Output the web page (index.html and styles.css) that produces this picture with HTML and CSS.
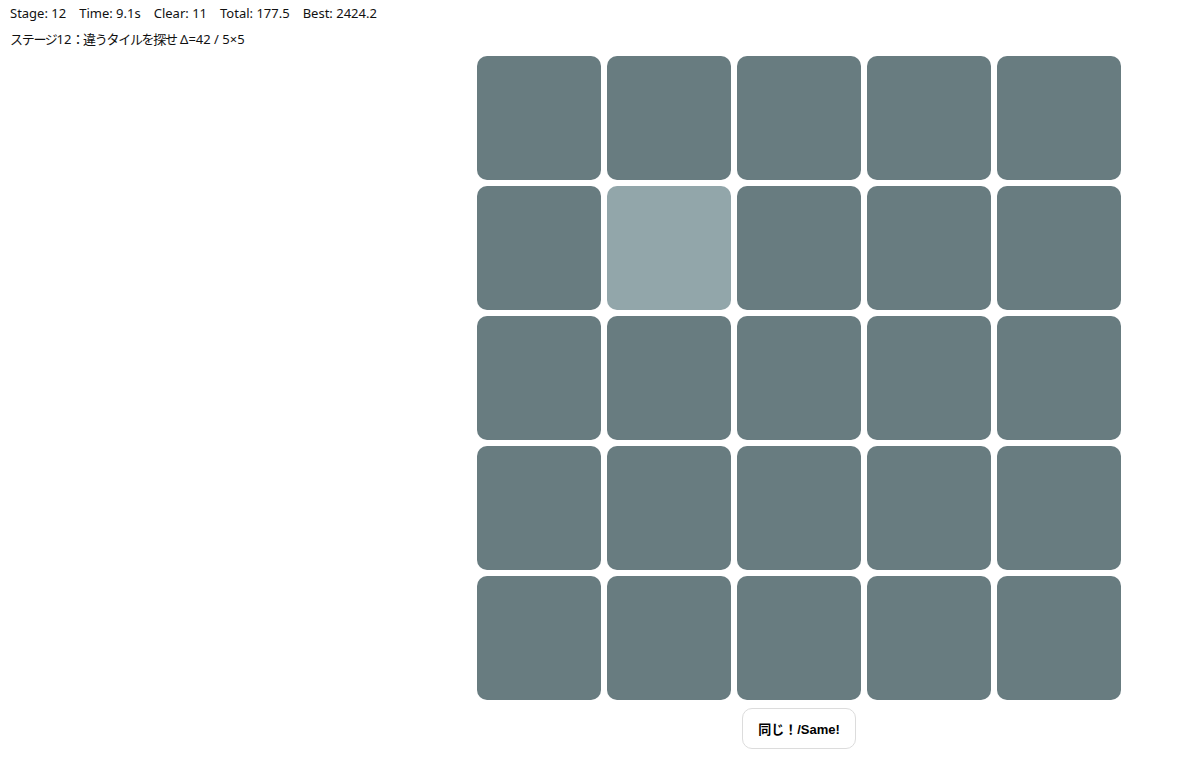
FILE: index.html
```html
<!DOCTYPE html>
<html lang="ja">
<head>
<meta charset="utf-8">
<title>違うタイルを探せ</title>
<link rel="stylesheet" href="styles.css">
</head>
<body>
<div class="stats">
  <span class="stat">Stage: 12</span>
  <span class="stat">Time: 9.1s</span>
  <span class="stat">Clear: 11</span>
  <span class="stat">Total: 177.5</span>
  <span class="stat">Best: 2424.2</span>
</div>
<div class="prompt"><span class="jp">ステージ</span>12<span class="jp">：違うタイルを探せ</span> Δ=42 / 5×5</div>
<div class="stage">
  <div class="board">
    <div class="grid">
      <div class="tile"></div><div class="tile"></div><div class="tile"></div><div class="tile"></div><div class="tile"></div>
      <div class="tile"></div><div class="tile odd"></div><div class="tile"></div><div class="tile"></div><div class="tile"></div>
      <div class="tile"></div><div class="tile"></div><div class="tile"></div><div class="tile"></div><div class="tile"></div>
      <div class="tile"></div><div class="tile"></div><div class="tile"></div><div class="tile"></div><div class="tile"></div>
      <div class="tile"></div><div class="tile"></div><div class="tile"></div><div class="tile"></div><div class="tile"></div>
    </div>
    <button class="same">同じ！/Same!</button>
  </div>
</div>
</body>
</html>
```
FILE: styles.css
```css
html, body {
  margin: 0;
  padding: 0;
  background: #ffffff;
}
body {
  padding: 4px 0 0 10px;
  font-family: "Noto Sans", "Noto Sans CJK JP", sans-serif;
  font-size: 13px;
  color: #111;
}
.stats {
  display: flex;
  gap: 13px;
  line-height: 18px;
  height: 18px;
}
.prompt {
  margin-top: 8px;
  line-height: 18px;
  height: 18px;
}
.jp {
  letter-spacing: -1.3px;
}
.stage {
  display: flex;
  margin-top: 8px;
  padding-left: 467px;
}
.board {
  display: flex;
  flex-direction: column;
  align-items: center;
  gap: 8px;
}
.grid {
  display: grid;
  grid-template-columns: repeat(5, 124px);
  grid-auto-rows: 124px;
  gap: 6px;
}
.tile {
  background: #687c80;
  border-radius: 10px;
}
.tile.odd {
  background: #92a6aa;
}
.same {
  width: 114px;
  height: 41px;
  background: #fff;
  border: 1px solid #dcdcdc;
  border-radius: 10px;
  font-family: "Liberation Sans", "Noto Sans CJK JP", sans-serif;
  font-weight: bold;
  font-size: 13px;
  color: #000;
  padding: 0;
}
```
